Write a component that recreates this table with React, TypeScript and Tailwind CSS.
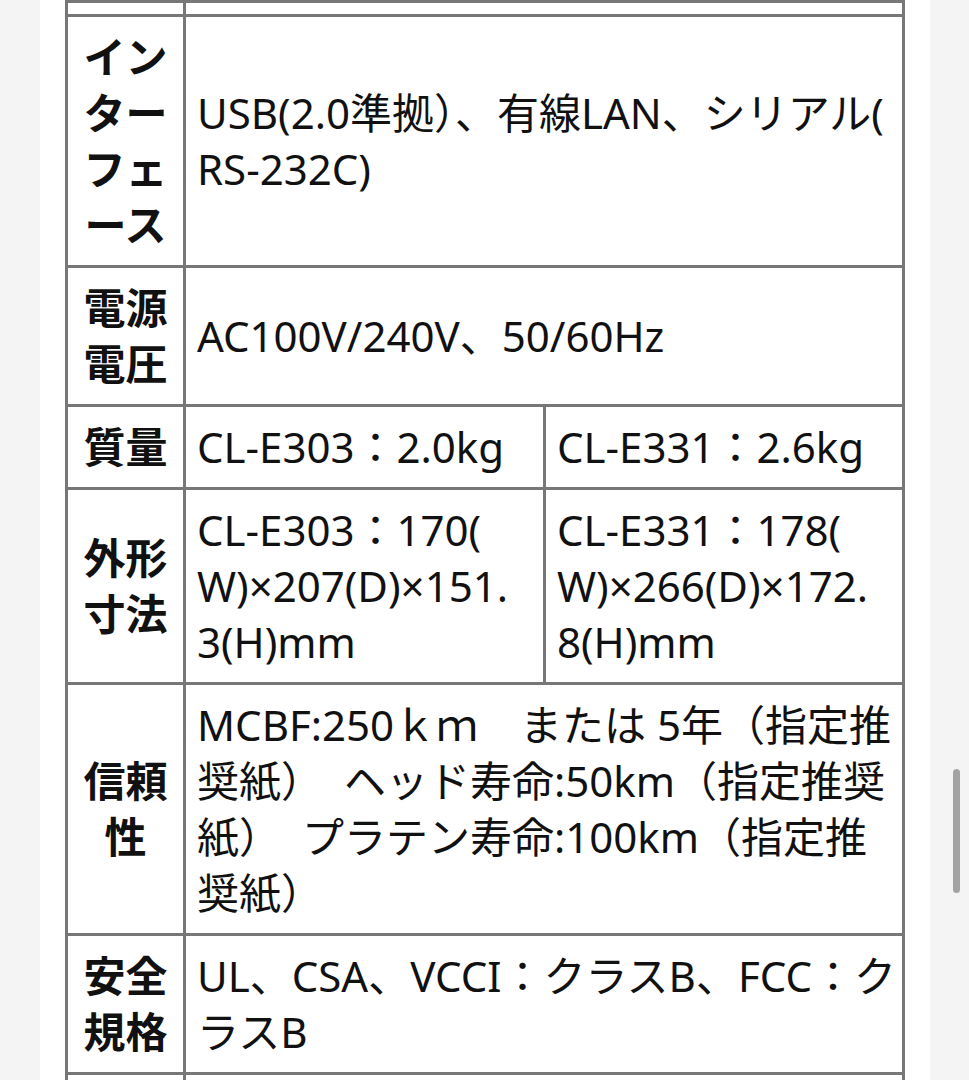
import React from "react";

type Row = {
    label: string;
    values: string[];
};

const rows: Row[] = [
    {
        label: "インターフェース",
        values: ["USB(2.0準拠）、有線LAN、シリアル(RS-232C)"],
    },
    { label: "電源電圧", values: ["AC100V/240V、50/60Hz"] },
    { label: "質量", values: ["CL-E303：2.0kg", "CL-E331：2.6kg"] },
    {
        label: "外形寸法",
        values: [
            "CL-E303：170(W)×207(D)×151.3(H)mm",
            "CL-E331：178(W)×266(D)×172.8(H)mm",
        ],
    },
    {
        label: "信頼性",
        values: [
            "MCBF:250ｋｍ　または 5年（指定推奨紙）　ヘッド寿命:50km（指定推奨紙）　プラテン寿命:100km（指定推奨紙）",
        ],
    },
    {
        label: "安全規格",
        values: ["UL、CSA、VCCI：クラスB、FCC：クラスB"],
    },
];

export default function App() {
    return (
        <div
            className="relative h-[1080px] overflow-hidden bg-[#f4f4f4] text-[#111]"
            style={{ fontFamily: '"Noto Sans", "Noto Sans CJK JP", sans-serif' }}
        >
            <div className="ml-[40px] w-[890px] h-full bg-white pl-[25px]">
                <table className="w-[837px] table-fixed border-collapse border-[3px] border-[#777]">
                    <colgroup>
                        <col className="w-[118px]" />
                        <col className="w-[360px]" />
                        <col className="w-[359px]" />
                    </colgroup>
                    <tbody className="text-[42px] leading-[56px] [line-break:anywhere]">
                        {/* previous row, scrolled off the top */}
                        <tr>
                            <th className="h-[14px] border-[3px] border-t-0 border-[#777]"></th>
                            <td colSpan={2} className="border-[3px] border-t-0 border-[#777]"></td>
                        </tr>
                        {rows.map((row, i) => {
                            const wide = row.values.length === 1;
                            return (
                                <tr key={i}>
                                    <th className="border-[3px] border-[#777] px-[12px] py-[12px] text-center align-middle font-semibold">
                                        {row.label}
                                    </th>
                                    {row.values.map((v, j) => (
                                        <td
                                            key={j}
                                            colSpan={wide ? 2 : 1}
                                            className={
                                                wide
                                                    ? "border-[3px] border-[#777] pl-[11px] pr-[2px] py-[12px] align-middle font-normal"
                                                    : "border-[3px] border-[#777] pl-[11px] pr-[30px] py-[12px] align-middle font-normal"
                                            }
                                        >
                                            {v}
                                        </td>
                                    ))}
                                </tr>
                            );
                        })}
                        <tr>
                            <th className="h-[120px] border-[3px] border-[#777]"></th>
                            <td colSpan={2} className="border-[3px] border-[#777]"></td>
                        </tr>
                    </tbody>
                </table>
            </div>
            {/* scrollbar thumb */}
            <div className="absolute left-[953px] top-[769px] w-[7px] h-[124px] rounded-full bg-[#a3a3a3]" />
        </div>
    );
}
